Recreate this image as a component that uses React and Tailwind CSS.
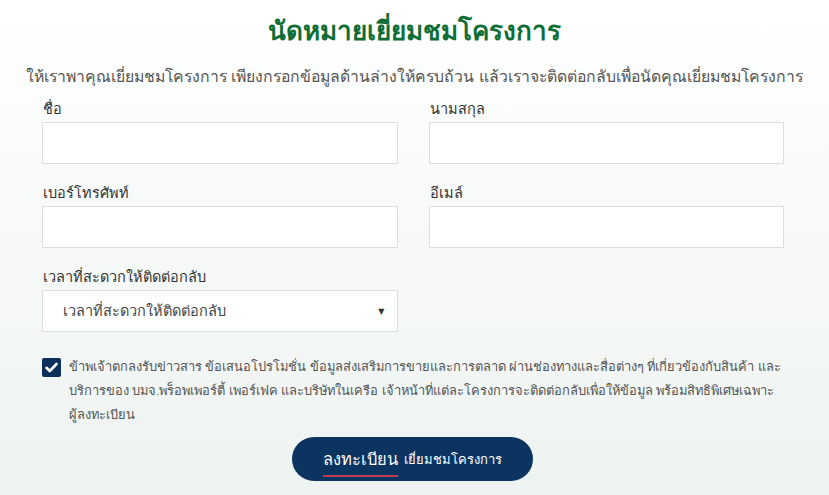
import React from 'react';

const Field = ({ label }) => (
  <div className="flex flex-col">
    <label className="text-[14.5px] leading-[20px] text-[#333] mb-[4px] pl-[1px]">{label}</label>
    <input type="text" className="h-[42px] w-full bg-white border border-[#dcdfe0] outline-none" />
  </div>
);

const App = () => {
  return (
    <div
      className="w-[829px] h-[495px] overflow-hidden bg-gradient-to-b from-white to-[#edf3f1] text-[#444]"
      style={{ fontFamily: '"Noto Sans", "DejaVu Sans", sans-serif' }}
    >
      {/* Title */}
      <h1 className="text-center text-[26px] leading-[40px] font-semibold text-[#0e6e35] pt-[10px]">
        นัดหมายเยี่ยมชมโครงการ
      </h1>
      <p className="text-center text-[15.8px] leading-[24px] text-[#555] mt-[14px] font-light">
        ให้เราพาคุณเยี่ยมชมโครงการ เพียงกรอกข้อมูลด้านล่างให้ครบถ้วน แล้วเราจะติดต่อกลับเพื่อนัดคุณเยี่ยมชมโครงการ
      </p>

      <div className="w-[742px] ml-[42px] mt-[10px]">
        <div className="grid grid-cols-2 gap-x-[31px] gap-y-[18px]">
          <Field label="ชื่อ" />
          <Field label="นามสกุล" />
          <Field label="เบอร์โทรศัพท์" />
          <Field label="อีเมล์" />
          <div className="flex flex-col">
            <label className="text-[14.5px] leading-[20px] text-[#333] mb-[4px] pl-[1px]">เวลาที่สะดวกให้ติดต่อกลับ</label>
            <div className="h-[42px] w-full bg-white border border-[#dcdfe0] flex items-center justify-between pl-[20px] pr-[12px]">
              <span className="text-[14.5px] text-[#444]">เวลาที่สะดวกให้ติดต่อกลับ</span>
              <span className="text-[8px] text-[#333]">▼</span>
            </div>
          </div>
        </div>

        {/* Consent */}
        <div className="flex gap-[8px] mt-[22px] -mr-[20px]">
          <div className="w-[19px] h-[19px] shrink-0 rounded-[2px] bg-[#0c2f5e] flex items-center justify-center mt-[4px]">
            <svg width="13" height="11" viewBox="0 0 13 11">
              <path d="M1.5 5.8 L4.8 9 L11.5 2" fill="none" stroke="white" strokeWidth="2.6" strokeLinecap="round" strokeLinejoin="round" />
            </svg>
          </div>
          <p className="text-[12.9px] leading-[24px] text-[#555] font-light">
            ข้าพเจ้าตกลงรับข่าวสาร ข้อเสนอโปรโมชั่น ข้อมูลส่งเสริมการขายและการตลาด ผ่านช่องทางและสื่อต่างๆ ที่เกี่ยวข้องกับสินค้า และบริการของ บมจ.พร็อพเพอร์ตี้ เพอร์เฟค และบริษัทในเครือ เจ้าหน้าที่แต่ละโครงการจะติดต่อกลับเพื่อให้ข้อมูล พร้อมสิทธิพิเศษเฉพาะ<span className="whitespace-nowrap">ผู้ลงทะเบียน</span>
          </p>
        </div>

        {/* Button */}
        <div className="flex justify-center mt-[11px] pr-[2px]">
          <button className="w-[241px] h-[44px] rounded-full bg-[#0b3461] text-white flex items-center justify-center gap-[6px]">
            <span className="relative text-[16.5px] leading-[24px] font-light">
              ลงทะเบียน
              <span className="absolute left-0 right-0 -bottom-[6px] h-[2px] bg-[#c23a4d]"></span>
            </span>
            <span className="text-[13px] leading-[24px] font-light">เยี่ยมชมโครงการ</span>
          </button>
        </div>
      </div>
    </div>
  );
};

export default App;
